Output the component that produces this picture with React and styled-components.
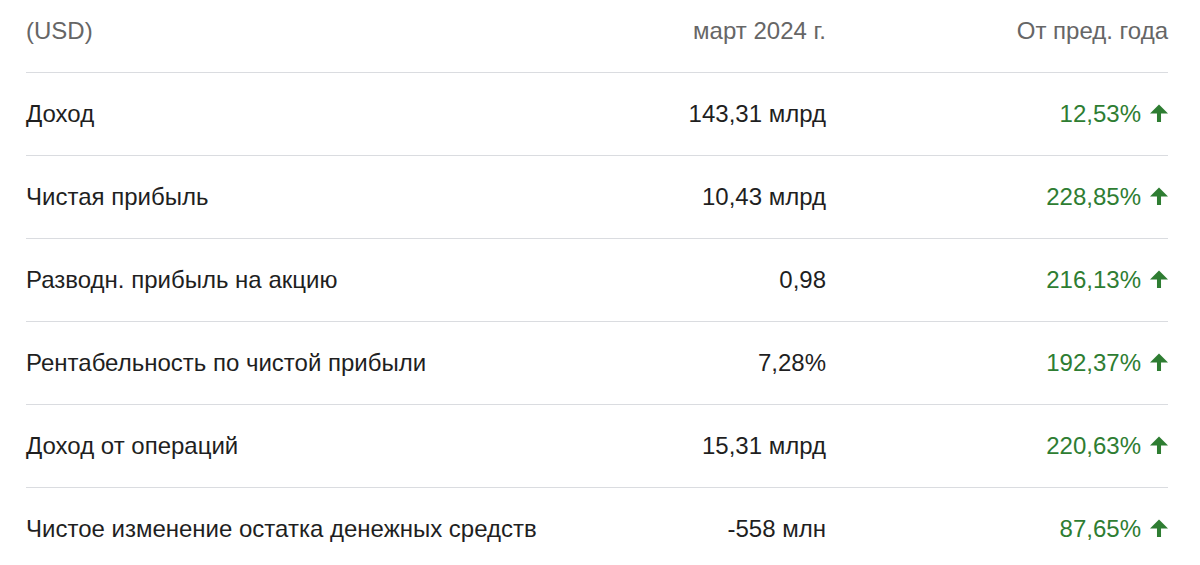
import React from "react";
import styled, { createGlobalStyle } from "styled-components";

const Global = createGlobalStyle`
  html, body { margin: 0; padding: 0; background: #fff; }
  body { font-family: "Liberation Sans", Arial, Helvetica, sans-serif; }
`;

const Table = styled.div`
  padding: 0 32px 0 26px;
  width: 1200px;
  box-sizing: border-box;
`;

const Row = styled.div`
  display: grid;
  grid-template-columns: minmax(0, 1fr) 260px 342px;
  align-items: center;
  height: ${(p) => (p.$head ? "72px" : "83px")};
  box-sizing: border-box;
  border-top: ${(p) => (p.$head ? "none" : "1px solid #dadce0")};
  padding-bottom: ${(p) => (p.$head ? "10px" : "0")};
  font-size: 24px;
  color: ${(p) => (p.$head ? "#666" : "#1f1f1f")};
`;

const Label = styled.div`
  white-space: nowrap;
`;

const Value = styled.div`
  text-align: right;
  white-space: nowrap;
`;

const Change = styled.div`
  display: flex;
  justify-content: flex-end;
  align-items: center;
  gap: 9px;
  color: ${(p) => (p.$head ? "#666" : "#2e7d32")};
  white-space: nowrap;
`;

const Arrow = () => (
  <svg width="18" height="18" viewBox="0 0 16 16" style={{ marginTop: -2 }}>
    <polygon points="0,8.4 8,0.4 16,8.4" fill="#2e7d32" />
    <rect x="6.2" y="8" width="3.6" height="8" fill="#2e7d32" />
  </svg>
);

const rows = [
  ["Доход", "143,31 млрд", "12,53%"],
  ["Чистая прибыль", "10,43 млрд", "228,85%"],
  ["Разводн. прибыль на акцию", "0,98", "216,13%"],
  ["Рентабельность по чистой прибыли", "7,28%", "192,37%"],
  ["Доход от операций", "15,31 млрд", "220,63%"],
  ["Чистое изменение остатка денежных средств", "-558 млн", "87,65%"],
];

export default function App() {
  return (
    <>
      <Global />
      <Table>
        <Row $head>
          <Label>(USD)</Label>
          <Value>март 2024 г.</Value>
          <Change $head>От пред. года</Change>
        </Row>
        {rows.map(([l, v, c]) => (
          <Row key={l}>
            <Label>{l}</Label>
            <Value>{v}</Value>
            <Change>
              {c}
              <Arrow />
            </Change>
          </Row>
        ))}
      </Table>
    </>
  );
}
